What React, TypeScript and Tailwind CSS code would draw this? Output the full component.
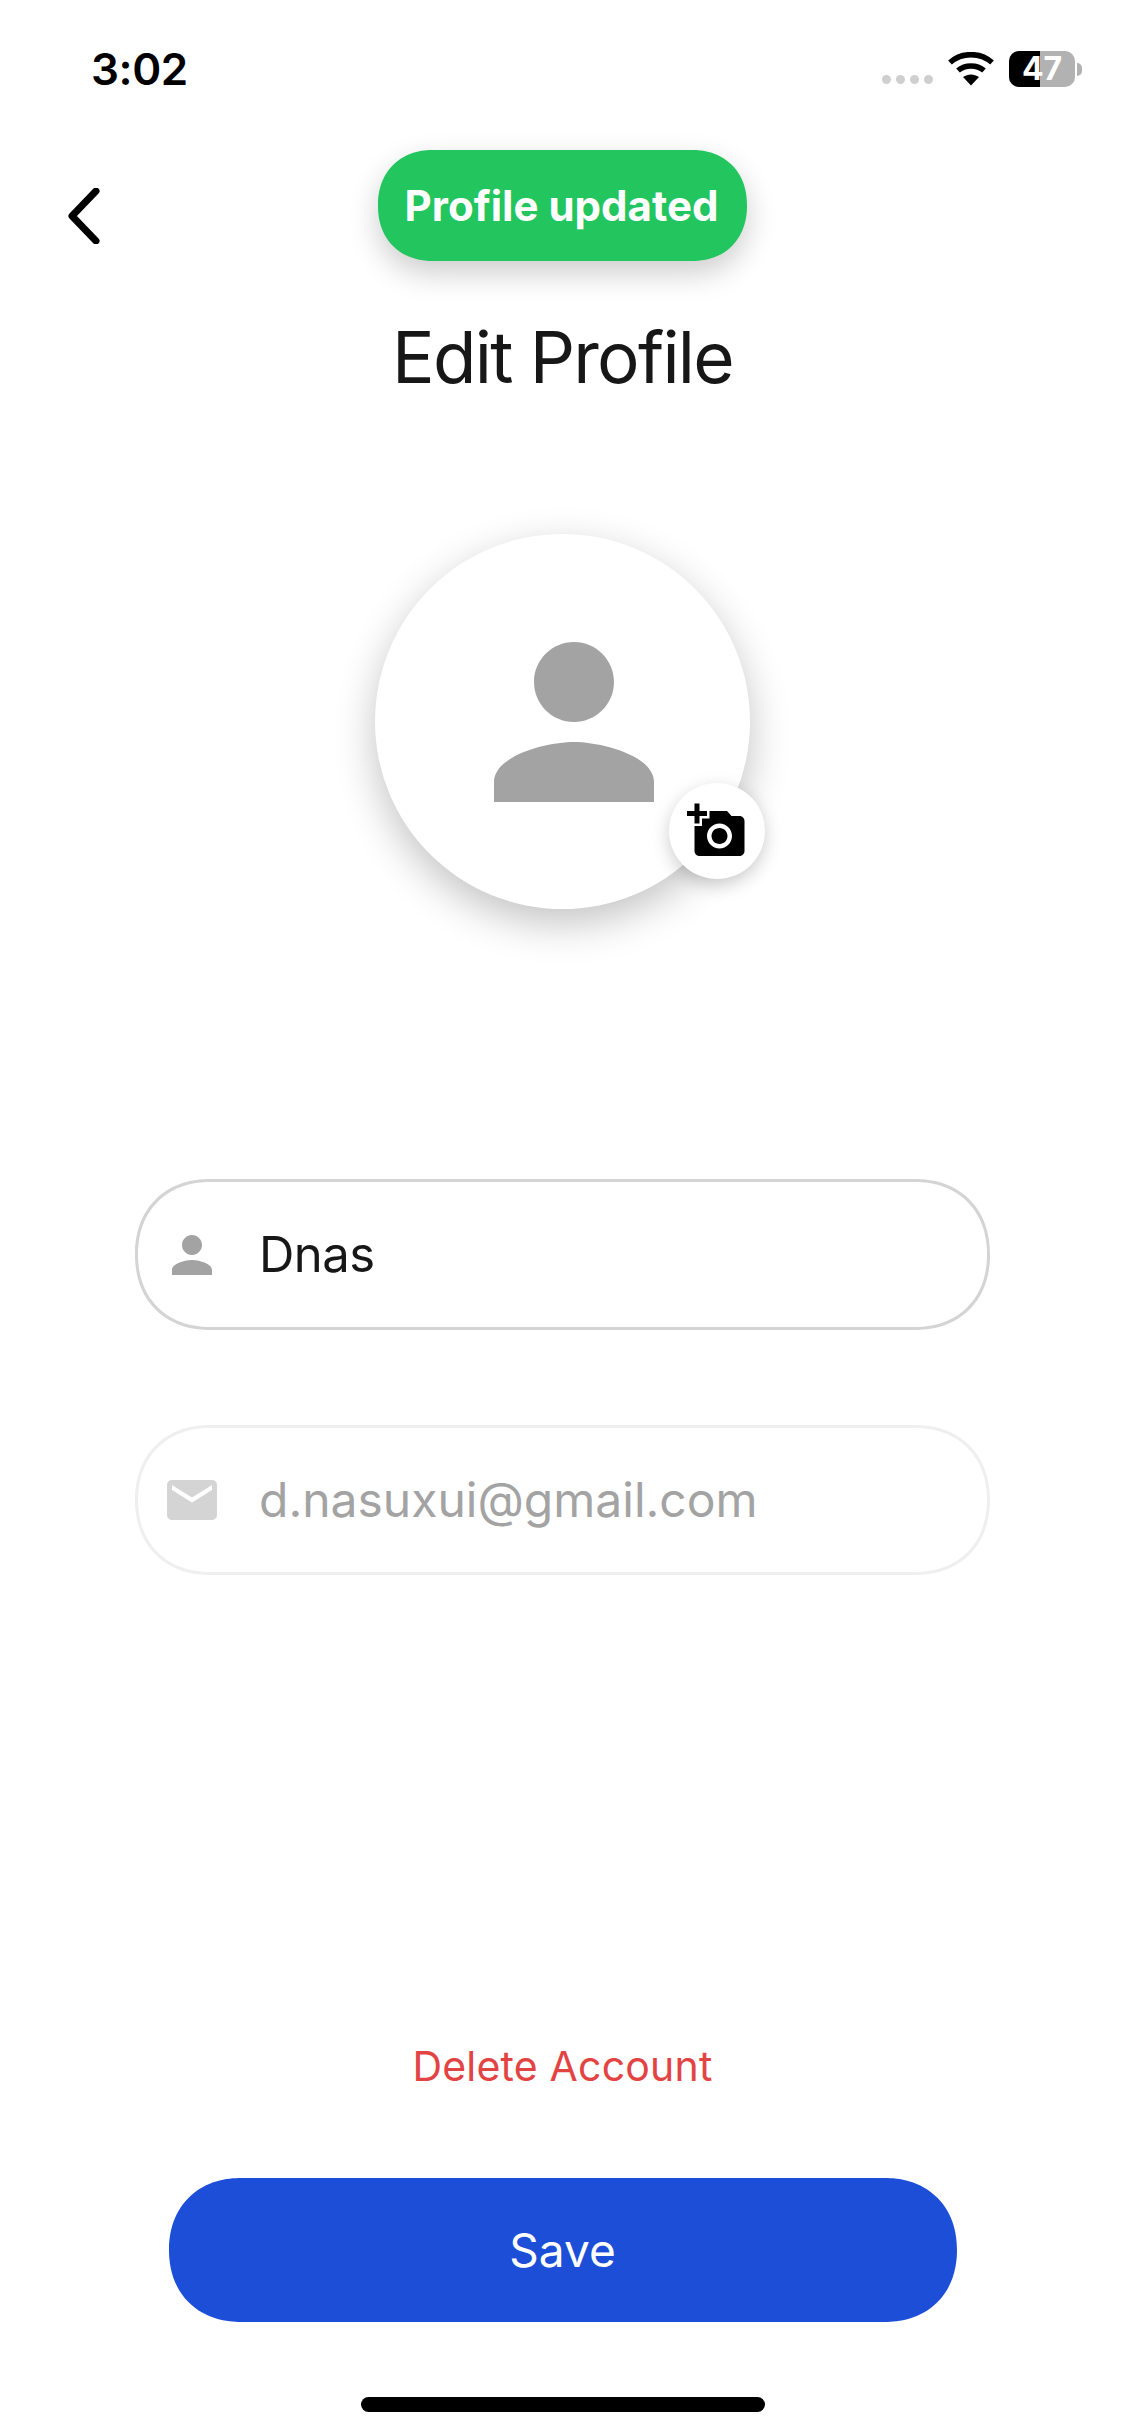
import { MdAddAPhoto, MdEmail, MdPerson } from 'react-icons/md';

function WifiIcon() {
    return (
        <svg width="46" height="34" viewBox="0 0 46 34" fill="none">
            <path d="M2 10.5C13.5 0 32.5 0 44 10.5" stroke="#000" strokeWidth="5.5" />
            <path d="M10 18.5C17 12.5 29 12.5 36 18.5" stroke="#000" strokeWidth="5.5" />
            <path d="M15 25L23 33.5L31 25C26 21.5 20 21.5 15 25Z" fill="#000" />
        </svg>
    );
}

function StatusBar() {
    return (
        <div className="w-full h-[138px] pl-[91px] pr-[43px] flex items-center justify-between shrink-0">
            <span className="text-[44px] leading-none font-semibold tracking-[-0.01em] text-black">3:02</span>
            <div className="flex items-center">
                <div className="flex gap-[5px] mt-[21px] mr-[15px]">
                    <div className="w-[9px] h-[9px] rounded-full bg-[#cfcfcf]" />
                    <div className="w-[9px] h-[9px] rounded-full bg-[#cfcfcf]" />
                    <div className="w-[9px] h-[9px] rounded-full bg-[#cfcfcf]" />
                    <div className="w-[9px] h-[9px] rounded-full bg-[#cfcfcf]" />
                </div>
                <WifiIcon />
                <div className="relative ml-[15px] w-[66px] h-[36px] rounded-[10px] bg-[#b2b2b2] flex items-center justify-center">
                    <div className="absolute left-0 top-0 bottom-0 w-[31px] rounded-l-[10px] bg-black" />
                    <span className="relative text-[32px] leading-none font-bold text-white">47</span>
                </div>
                <div className="ml-[2px] w-[5px] h-[13px] rounded-r-full bg-[#b2b2b2]" />
            </div>
        </div>
    );
}

export default function App() {
    return (
        <div className="relative w-[1125px] h-[2436px] bg-white flex flex-col items-center overflow-hidden font-['Inter',sans-serif]">
            <StatusBar />

            {/* Toast */}
            <div className="absolute left-[378px] top-[150px] w-[369px] h-[111px] pr-[2px] rounded-[55px] [corner-shape:superellipse(1.12)] bg-[#22c55e] flex items-center justify-center shadow-[0_12px_30px_rgba(0,0,0,0.2)]">
                <span className="text-[42px] font-bold text-white leading-none">Profile updated</span>
            </div>

            {/* Header */}
            <div className="w-full pl-[68px] mt-[50px] h-[55px] shrink-0">
                <svg width="32" height="56" viewBox="0 0 32 56" fill="none">
                    <path d="M28 3L4 28L28 53" stroke="#000" strokeWidth="7" strokeLinecap="round" strokeLinejoin="round" />
                </svg>
            </div>
            <h1 className="mt-[74px] h-[80px] text-[71px] leading-[80px] font-normal tracking-[-0.025em] text-[#171717]">Edit Profile</h1>

            {/* Avatar */}
            <div className="relative mt-[137px] w-[375px] h-[375px] rounded-full bg-white flex items-center justify-center shadow-[0_14px_40px_rgba(0,0,0,0.24)] shrink-0">
                <MdPerson className="ml-[23px] w-[240px] h-[240px] text-[#a3a3a3]" />
                <div className="absolute right-[-15px] bottom-[30px] w-[96px] h-[96px] rounded-full bg-white flex items-center justify-center shadow-[0_6px_18px_rgba(0,0,0,0.2)]">
                    <MdAddAPhoto className="w-[60px] h-[60px] text-black" />
                </div>
            </div>

            {/* Form */}
            <div className="mt-[270px] w-[855px] h-[151px] shrink-0 pl-[24px] flex items-center gap-[37px] border-[3px] border-[#d4d4d4] rounded-[75px] [corner-shape:superellipse(1.12)]">
                <MdPerson className="w-[60px] h-[60px] text-[#a3a3a3]" />
                <span className="text-[49px] leading-none tracking-[-0.01em] text-[#171717]">Dnas</span>
            </div>
            <div className="mt-[95px] w-[855px] h-[150px] shrink-0 pl-[24px] flex items-center gap-[37px] border-[3px] border-[#efefef] rounded-[75px] [corner-shape:superellipse(1.12)]">
                <MdEmail className="w-[60px] h-[60px] text-[#d4d4d4]" />
                <span className="text-[48px] leading-none text-[#a3a3a3]">d.nasuxui@gmail.com</span>
            </div>

            {/* Actions */}
            <span className="mt-auto text-[41px] leading-[48px] tracking-[0.005em] text-[#e24444]">Delete Account</span>
            <button className="mt-[88px] w-[788px] h-[144px] shrink-0 rounded-[72px] [corner-shape:superellipse(1.12)] bg-[#1d4ed8] flex items-center justify-center text-[46px] leading-none text-white">
                Save
            </button>
            <div className="mt-[75px] mb-[24px] w-[404px] h-[15px] shrink-0 rounded-full bg-black" />
        </div>
    );
}
